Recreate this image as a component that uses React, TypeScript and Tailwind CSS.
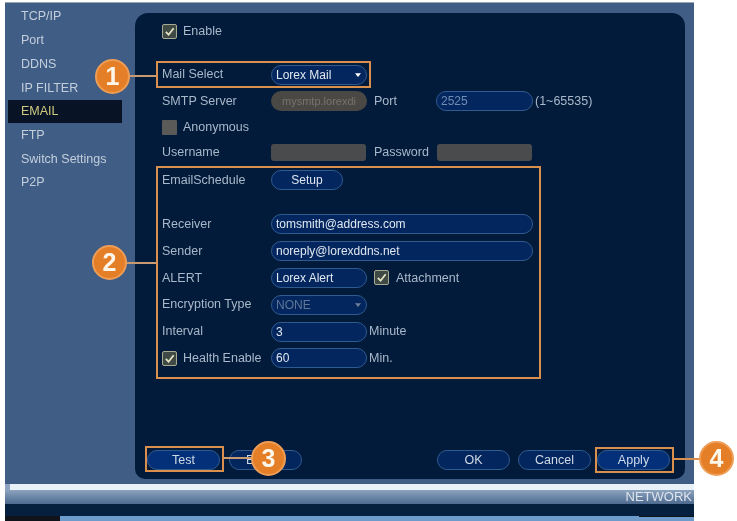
import type { ReactNode } from "react";

const menuItems = ["TCP/IP", "Port", "DDNS", "IP FILTER", "EMAIL", "FTP", "Switch Settings", "P2P"];

function CheckBox({ checked }: { checked?: boolean }) {
  if (!checked) return <span className="h-[15px] w-[15px] shrink-0 rounded-[1px] bg-[#5a5a58]" />;
  return (
    <span className="flex h-[15px] w-[15px] shrink-0 items-center justify-center rounded-[2px] border border-[#a8ab94] bg-[#3f4a45]">
      <svg viewBox="0 0 12 12" className="h-[11px] w-[11px]" fill="none">
        <path d="M2 6.5 L5 9.5 L10.5 2.5" stroke="#e3e2c4" strokeWidth="2" />
      </svg>
    </span>
  );
}

function Pill({ children, className = "" }: { children?: ReactNode; className?: string }) {
  return (
    <span
      className={`flex h-[20px] shrink-0 items-center rounded-full border border-[#2f5b8f] bg-[#04265e] pl-[4px] text-[12px] text-[#dfe7f0] ${className}`}
    >
      {children}
    </span>
  );
}

function Caret({ dim }: { dim?: boolean }) {
  return (
    <svg viewBox="0 0 8 5" className="absolute right-[5px] top-[7px] h-[4px] w-[6px]">
      <path d="M0 0 H8 L4 5 Z" fill={dim ? "#6f8098" : "#ffffff"} />
    </svg>
  );
}

function Row({ label, children, className = "h-[26.8px]" }: { label: ReactNode; children?: ReactNode; className?: string }) {
  return (
    <div className={`flex items-center ${className}`}>
      <div className="flex w-[109px] shrink-0 items-center gap-[6px] text-[#a9b8ca]">{label}</div>
      {children}
    </div>
  );
}

function FooterButton({ children, active, className = "justify-center" }: { children: ReactNode; active?: boolean; className?: string }) {
  return (
    <span
      className={`flex h-[20px] w-[73px] items-center rounded-full border border-[#2f5b8f] text-[#d0dae6] ${
        active ? "bg-[#04307a]" : "bg-[#04265e]"
      } ${className}`}
    >
      {children}
    </span>
  );
}

function Callout({ n, className }: { n: number; className: string }) {
  return (
    <span
      className={`absolute flex h-[35px] w-[35px] items-center justify-center rounded-full border-2 border-[#ee9d56] bg-[#e57f27] text-[25px] font-bold text-[#fff6ea] ${className}`}
    >
      {n}
    </span>
  );
}

export default function App() {
  return (
    <div
      className="relative h-[521px] w-[737px] overflow-hidden bg-white text-[12.5px] blur-[0.6px]"
      style={{ fontFamily: '"Liberation Sans", Arial, sans-serif' }}
    >
      <div className="ml-[5px] mt-[2px] flex h-[519px] w-[689px] flex-col bg-[#3f5d85]">
        <div className="h-[1px] bg-[#9aa5b4]" />
        <div className="flex h-[481px] pr-[9px]">
          <nav className="w-[130px] shrink-0 pt-[2px]">
            {menuItems.map((item) => (
              <div
                key={item}
                className={`ml-[3px] mr-[13px] flex h-[23.7px] items-center pl-[13px] ${
                  item === "EMAIL" ? "bg-[#081426] text-[#cfc97e]" : "text-[#c4cfdc]"
                }`}
              >
                {item}
              </div>
            ))}
          </nav>

          <main className="mt-[10px] mb-[5px] flex flex-1 flex-col justify-between rounded-b-[10px] rounded-t-[13px] bg-[#021b3a] pb-[9px] pl-[27px]">
            <div className="pt-[5px]">
              <div className="flex h-[27px] items-center gap-[6px] text-[#a9b8ca]">
                <CheckBox checked />
                <span>Enable</span>
              </div>

              <Row label="Mail Select" className="mt-[16px] h-[27px]">
                <Pill className="relative w-[96px] font-medium">
                  Lorex Mail
                  <Caret />
                </Pill>
              </Row>
              <Row label="SMTP Server" className="h-[26px]">
                <span className="flex h-[20px] w-[96px] shrink-0 items-center justify-center overflow-hidden rounded-full bg-[#4a4844] text-[11px] text-[#77736c]">
                  mysmtp.lorexdi
                </span>
                <span className="ml-[7px] w-[62px] text-[#a9b8ca]">Port</span>
                <Pill className="w-[97px] !text-[#6f8cb3]">2525</Pill>
                <span className="ml-[2px] text-[#a9b8ca]">(1~65535)</span>
              </Row>
              <div className="flex h-[26px] items-center gap-[6px] text-[#a9b8ca]">
                <CheckBox />
                <span>Anonymous</span>
              </div>
              <Row label="Username" className="h-[24px]">
                <span className="h-[17px] w-[95px] shrink-0 rounded-[3px] bg-[#4a4b4d]" />
                <span className="ml-[8px] w-[63px] text-[#a9b8ca]">Password</span>
                <span className="h-[17px] w-[95px] shrink-0 rounded-[3px] bg-[#4a4b4d]" />
              </Row>

              <Row label="EmailSchedule" className="mt-[2px] h-[28px]">
                <Pill className="w-[72px] justify-center !pl-0">Setup</Pill>
              </Row>

              <Row label="Receiver" className="mt-[17px] h-[26.8px]">
                <Pill className="w-[262px]">tomsmith@address.com</Pill>
              </Row>
              <Row label="Sender">
                <Pill className="w-[262px]">noreply@lorexddns.net</Pill>
              </Row>
              <Row label="ALERT">
                <Pill className="w-[96px]">Lorex Alert</Pill>
                <span className="ml-[7px]">
                  <CheckBox checked />
                </span>
                <span className="ml-[7px] text-[#a9b8ca]">Attachment</span>
              </Row>
              <Row label="Encryption Type">
                <Pill className="relative w-[96px] !text-[#5f7796]">
                  NONE
                  <Caret dim />
                </Pill>
              </Row>
              <Row label="Interval">
                <Pill className="w-[96px]">3</Pill>
                <span className="ml-[2px] text-[#a9b8ca]">Minute</span>
              </Row>
              <Row
                label={
                  <>
                    <CheckBox checked />
                    <span>Health Enable</span>
                  </>
                }
              >
                <Pill className="w-[96px]">60</Pill>
                <span className="ml-[2px] text-[#a9b8ca]">Min.</span>
              </Row>
            </div>

            <div className="-ml-[15px] flex justify-between pr-[15px]">
              <div className="flex gap-[9px]">
                <FooterButton active className="justify-center !w-[73px]">Test</FooterButton>
                <FooterButton className="justify-start pl-[16px]">E</FooterButton>
              </div>
              <div className="flex">
                <FooterButton>OK</FooterButton>
                <span className="w-[8px]" />
                <FooterButton>Cancel</FooterButton>
                <span className="w-[6px]" />
                <FooterButton active>Apply</FooterButton>
              </div>
            </div>
          </main>
        </div>

        <div className="relative flex-1 overflow-hidden bg-[#05203f]">
          <div className="bg-[#8ea4bf] pl-[5px]">
            <div className="h-[6px] bg-[#e9f1f8]" />
          </div>
          <div className="flex h-[14px] items-start justify-end bg-gradient-to-b from-[#8ea4bf] to-[#4d6a8f] pr-[2px] text-[13px] leading-[14px] text-[#dde4ec]">
            NETWORK
          </div>
          <div className="absolute bottom-0 left-0 h-[5px] w-full bg-[#6d9ccc]" />
          <div className="absolute bottom-0 left-0 h-[5px] w-[55px] bg-[#10141a]" />
          <div className="absolute bottom-[4px] right-0 h-[1px] w-[55px] bg-[#10141a]" />
        </div>
      </div>

      {/* numbered callouts drawn over the screen */}
      <div className="absolute left-[156px] top-[61px] h-[27px] w-[215px] border-2 border-[#d98f4e]" />
      <div className="absolute left-[156px] top-[166px] h-[213px] w-[385px] border-2 border-[#d98f4e]" />
      <div className="absolute left-[145px] top-[446px] h-[26px] w-[79px] border-2 border-[#d98f4e]" />
      <div className="absolute left-[595px] top-[447px] h-[26px] w-[79px] border-2 border-[#d98f4e]" />

      <div className="absolute left-[126px] top-[75px] h-[2px] w-[30px] bg-[#c79a72]" />
      <div className="absolute left-[126px] top-[262px] h-[2px] w-[30px] bg-[#c79a72]" />
      <div className="absolute left-[224px] top-[457px] h-[2px] w-[30px] bg-[#c79a72]" />
      <div className="absolute left-[674px] top-[458px] h-[2px] w-[28px] bg-[#d98f4e]" />

      <Callout n={1} className="left-[95px] top-[59px]" />
      <Callout n={2} className="left-[92px] top-[245px]" />
      <Callout n={3} className="left-[251px] top-[441px]" />
      <Callout n={4} className="left-[699px] top-[441px]" />
    </div>
  );
}
